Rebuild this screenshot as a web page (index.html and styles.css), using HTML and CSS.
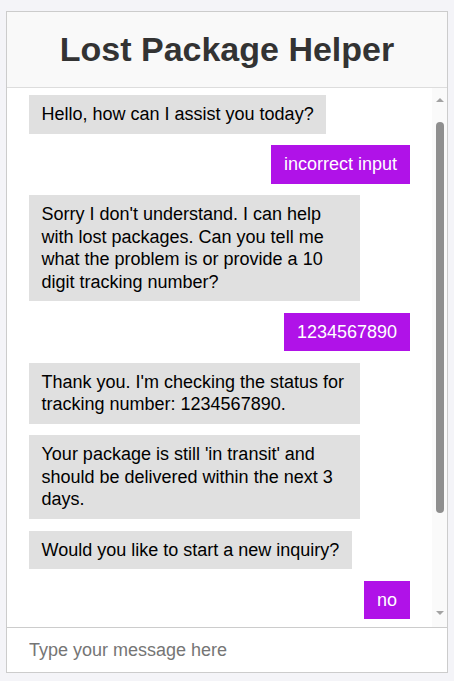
FILE: index.html
```html
<!DOCTYPE html>
<html lang="en">
<head>
<meta charset="utf-8">
<title>Lost Package Helper</title>
<link rel="stylesheet" href="styles.css">
</head>
<body>
<div class="app">
  <header class="header">
    <h1 class="title">Lost Package Helper</h1>
  </header>
  <div class="chat">
    <div class="messages" id="messages">
      <div class="msg bot">Hello, how can I assist you today?</div>
      <div class="msg user">incorrect input</div>
      <div class="msg bot">Sorry I don't understand. I can help with lost packages. Can you tell me what the problem is or provide a 10 digit tracking number?</div>
      <div class="msg user">1234567890</div>
      <div class="msg bot">Thank you. I'm checking the status for tracking number: 1234567890.</div>
      <div class="msg bot">Your package is still 'in transit' and should be delivered within the next 3 days.</div>
      <div class="msg bot">Would you like to start a new inquiry?</div>
      <div class="msg user">no</div>
    </div>
    <div class="scrollbar" aria-hidden="true">
      <div class="sb-arrow sb-up"></div>
      <div class="sb-thumb"></div>
      <div class="sb-arrow sb-down"></div>
    </div>
  </div>
  <div class="composer">
    <input class="input" id="input" type="text" placeholder="Type your message here" autofocus>
  </div>
</div>
<script src="script.js"></script>
</body>
</html>
```

FILE: styles.css
```css
html, body {
  margin: 0;
  padding: 0;
}
body {
  background: #f4f4f8;
  font-family: "Liberation Sans", Arial, sans-serif;
  padding-top: 11px;
}
.app {
  box-sizing: border-box;
  width: 442px;
  height: 662px;
  margin: 0 auto;
  border: 1px solid #cccccc;
  background: #ffffff;
  display: flex;
  flex-direction: column;
}
.header {
  flex: 0 0 75px;
  background: #f9f9f9;
  border-bottom: 1px solid #dddddd;
  display: flex;
  align-items: center;
  justify-content: center;
}
.title {
  margin: 0;
  font-size: 34px;
  font-weight: bold;
  color: #333333;
}
.chat {
  flex: 1 1 auto;
  min-height: 0;
  display: flex;
}
.messages {
  flex: 1 1 auto;
  min-width: 0;
  overflow-y: auto;
  padding: 7px 22px 7px;
  display: flex;
  flex-direction: column;
  align-items: flex-start;
  gap: 11.6px;
}
.msg {
  box-sizing: border-box;
  max-width: 331px;
  padding: 8px 12.5px;
  font-size: 18px;
  line-height: 1.25;
  flex: 0 0 auto;
}
.bot {
  background: #e0e0e0;
  color: #000000;
}
.user {
  align-self: flex-end;
  background: #b012e8;
  color: #ffffff;
  padding: 8px 13px;
}
.scrollbar {
  flex: 0 0 15px;
  background: #fafafa;
  display: flex;
  flex-direction: column;
  align-items: center;
}
.sb-arrow {
  width: 0;
  height: 0;
  border-left: 4px solid transparent;
  border-right: 4px solid transparent;
}
.sb-up {
  margin-top: 10px;
  border-bottom: 4px solid #a3a3a3;
}
.sb-down {
  margin-top: auto;
  margin-bottom: 12px;
  border-top: 4px solid #a3a3a3;
}
.sb-thumb {
  margin-top: 20px;
  width: 8px;
  height: 391px;
  border-radius: 4px;
  background: #8f8f8f;
}
.composer {
  flex: 0 0 44px;
  border-top: 1px solid #cccccc;
  display: flex;
}
.input {
  flex: 1 1 auto;
  border: none;
  outline: none;
  margin: 0;
  padding: 0 22px;
  font-family: "Liberation Sans", Arial, sans-serif;
  font-size: 18px;
  color: #000000;
  background: #ffffff;
}
.input::placeholder {
  color: #757575;
}
```

FILE: script.js
```js
document.getElementById('input').focus();
```
